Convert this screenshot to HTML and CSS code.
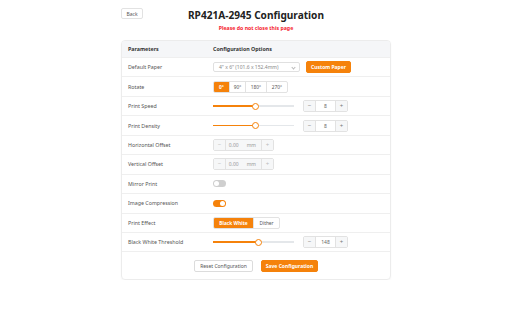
FILE: index.html
```html
<!DOCTYPE html>
<html lang="en">

<head>
  <meta charset="UTF-8" />
  <title>RP421A-2945 Configuration</title>
  <link rel="stylesheet" href="styles.css">
</head>

<body>
  <div class="page">
    <div class="top">
      <div class="top-left"><button class="btn back">Back</button></div>
      <h1 class="title">RP421A-2945 Configuration</h1>
      <div></div>
    </div>
    <div class="warning">Please do not close this page</div>

    <div class="card">
      <div class="row head">
        <div class="label">Parameters</div>
        <div class="opts">Configuration Options</div>
      </div>

      <div class="row">
        <div class="label">Default Paper</div>
        <div class="opts">
          <div class="select">4" x 6" (101.6 x 152.4mm)<span class="caret"></span></div>
          <button class="btn primary custom">Custom Paper</button>
        </div>
      </div>

      <div class="row">
        <div class="label">Rotate</div>
        <div class="opts">
          <div class="seg">
            <span class="seg-item on w15">0°</span>
            <span class="seg-item w15">90°</span>
            <span class="seg-item w20">180°</span>
            <span class="seg-item w20">270°</span>
          </div>
        </div>
      </div>

      <div class="row">
        <div class="label">Print Speed</div>
        <div class="opts">
          <div class="slider"><div class="fill" style="width: 52%"></div><div class="thumb"></div><div class="rest"></div></div>
          <div class="num"><span class="step">−</span><span class="val">8</span><span class="step">+</span></div>
        </div>
      </div>

      <div class="row">
        <div class="label">Print Density</div>
        <div class="opts">
          <div class="slider"><div class="fill" style="width: 52%"></div><div class="thumb"></div><div class="rest"></div></div>
          <div class="num"><span class="step">−</span><span class="val">8</span><span class="step">+</span></div>
        </div>
      </div>

      <div class="row">
        <div class="label">Horizontal Offset</div>
        <div class="opts">
          <div class="num off"><span class="step">−</span><span class="val">0.00<i class="unit">mm</i></span><span class="step">+</span></div>
        </div>
      </div>

      <div class="row">
        <div class="label">Vertical Offset</div>
        <div class="opts">
          <div class="num off"><span class="step">−</span><span class="val">0.00<i class="unit">mm</i></span><span class="step">+</span></div>
        </div>
      </div>

      <div class="row">
        <div class="label">Mirror Print</div>
        <div class="opts"><span class="toggle"></span></div>
      </div>

      <div class="row">
        <div class="label">Image Compression</div>
        <div class="opts"><span class="toggle on"></span></div>
      </div>

      <div class="row">
        <div class="label">Print Effect</div>
        <div class="opts">
          <div class="seg">
            <span class="seg-item on bw">Black White</span>
            <span class="seg-item dith">Dither</span>
          </div>
        </div>
      </div>

      <div class="row">
        <div class="label">Black White Threshold</div>
        <div class="opts">
          <div class="slider"><div class="fill" style="width: 56%"></div><div class="thumb"></div><div class="rest"></div></div>
          <div class="num"><span class="step">−</span><span class="val">148</span><span class="step">+</span></div>
        </div>
      </div>

      <div class="foot">
        <button class="btn plain">Reset Configuration</button>
        <button class="btn primary">Save Configuration</button>
      </div>
    </div>
  </div>
</body>

</html>
```

FILE: styles.css
```css
body {
  margin: 0;
  background: #fff;
  font-family: "Noto Sans", "Open Sans", sans-serif;
  color: #555;
}

.page {
  width: 270px;
  margin: 0 auto;
  padding-top: 8px;
}

.top {
  display: grid;
  grid-template-columns: 1fr auto 1fr;
  align-items: start;
}

.top-left {
  display: flex;
}

.title {
  margin: 0;
  font-size: 10.1px;
  line-height: 14px;
  font-weight: 700;
  color: #222;
}

.warning {
  text-align: center;
  color: #f5222d;
  font-size: 5.2px;
  font-weight: 700;
  margin-top: 3px;
  line-height: 7px;
}

.btn {
  font-family: inherit;
  border-radius: 2px;
  cursor: pointer;
  padding: 0;
}

.back {
  width: 22px;
  height: 11px;
  font-size: 5px;
  background: #fff;
  border: 1px solid #e2e2e2;
  color: #555;
}

.card {
  margin-top: 8px;
  border: 1px solid #ececec;
  border-radius: 4px;
  box-shadow: 0 1px 2px rgba(0, 0, 0, 0.04);
  overflow: hidden;
}

.row {
  display: grid;
  grid-template-columns: 91px 1fr;
  align-items: center;
  height: 19.44px;
  box-sizing: border-box;
  border-bottom: 1px solid #efefef;
  font-size: 5.3px;
}

.row.head {
  height: 17px;
  background: #f5f6f8;
  font-weight: 700;
  color: #333;
}

.label {
  padding-left: 6px;
}

.opts {
  display: flex;
  align-items: center;
}

.select {
  width: 87px;
  height: 10px;
  box-sizing: border-box;
  border: 1px solid #e0e0e0;
  border-radius: 2px;
  padding-left: 5px;
  display: flex;
  align-items: center;
  color: #888;
  font-size: 5px;
  position: relative;
}

.caret {
  position: absolute;
  right: 4px;
  top: 2.5px;
  width: 2px;
  height: 2px;
  border-right: 0.6px solid #bbb;
  border-bottom: 0.6px solid #bbb;
  transform: rotate(45deg);
}

.primary {
  background: #f5820b;
  border: 1px solid #f5820b;
  color: #fff;
  font-weight: 700;
}

.custom {
  margin-left: 6px;
  height: 12px;
  width: 45px;
  font-size: 5px;
}

.seg {
  display: flex;
  height: 12px;
  border: 1px solid #e2e2e2;
  border-radius: 2px;
  box-sizing: border-box;
  overflow: hidden;
}

.seg-item {
  display: flex;
  align-items: center;
  justify-content: center;
  font-size: 4.8px;
  color: #555;
  border-left: 1px solid #e2e2e2;
}

.seg-item:first-child {
  border-left: 0;
}

.seg-item.on {
  background: #f5820b;
  color: #fff;
  font-weight: 700;
}

.w15 { width: 15px; }
.w20 { width: 20px; }
.bw { width: 39px; }
.dith { width: 25px; }

.slider {
  width: 81px;
  display: flex;
  align-items: center;
}

.fill {
  height: 1.5px;
  background: #f5820b;
}

.thumb {
  width: 5px;
  height: 5px;
  border: 1px solid #f5820b;
  border-radius: 50%;
  background: #fff;
  margin: 0 -3px;
  position: relative;
  z-index: 1;
}

.rest {
  flex: 1;
  height: 1.5px;
  background: #e4e7ea;
}

.num {
  margin-left: 9px;
  display: flex;
  height: 12px;
  width: 45px;
  box-sizing: border-box;
  border: 1px solid #e2e2e2;
  border-radius: 2px;
  font-size: 5px;
}

.step {
  width: 11px;
  background: #f6f7f8;
  display: flex;
  align-items: center;
  justify-content: center;
  color: #777;
  font-size: 6px;
}

.step:first-child {
  border-right: 1px solid #e2e2e2;
}

.step:last-child {
  border-left: 1px solid #e2e2e2;
}

.val {
  flex: 1;
  display: flex;
  align-items: center;
  justify-content: center;
  color: #666;
}

.num.off {
  margin-left: 0;
  width: 61px;
  background: #f6f7f8;
}

.num.off .val {
  color: #999;
  justify-content: flex-end;
  padding-right: 5px;
}

.num.off .step {
  color: #bbb;
}

.unit {
  font-style: normal;
  margin-left: 8px;
}

.toggle {
  width: 13px;
  height: 7px;
  border-radius: 4px;
  background: #cfcfcf;
  display: flex;
  align-items: center;
  padding: 0 1px;
  box-sizing: border-box;
}

.toggle::after {
  content: "";
  width: 5px;
  height: 5px;
  border-radius: 50%;
  background: #fff;
}

.toggle.on {
  background: #f5820b;
  justify-content: flex-end;
}

.foot {
  height: 27px;
  display: flex;
  align-items: center;
  justify-content: center;
  gap: 8px;
}

.foot .btn {
  height: 12px;
  font-size: 5px;
}

.plain {
  width: 59px;
  background: #fff;
  border: 1px solid #dcdcdc;
  color: #555;
}

.foot .primary {
  width: 57px;
}
```
